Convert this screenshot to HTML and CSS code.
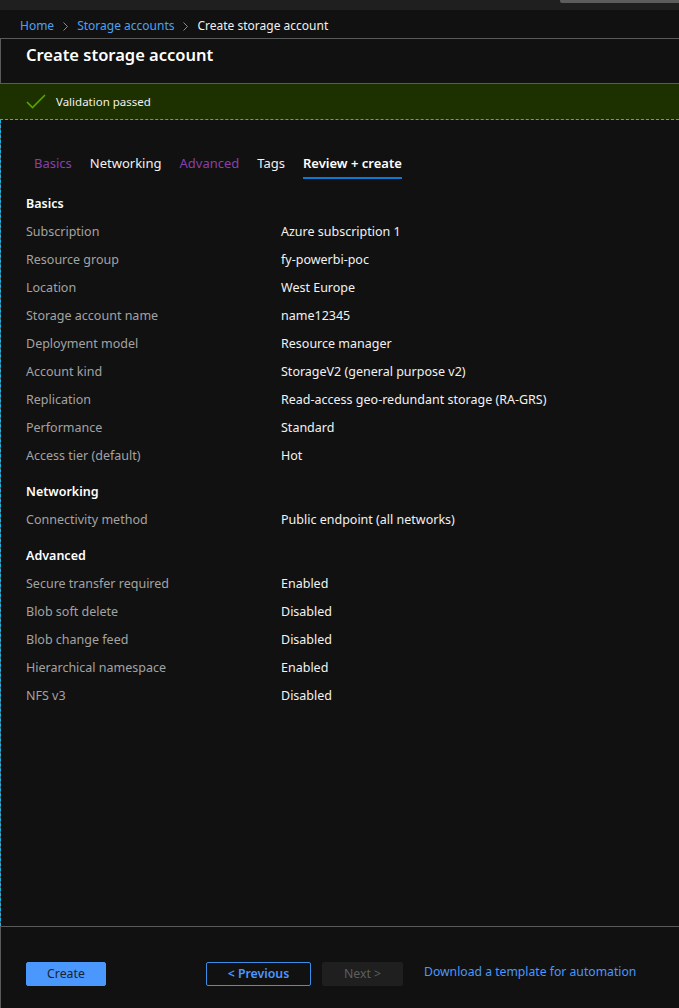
FILE: index.html
```html
<!DOCTYPE html>
<html>
<head>
<meta charset="utf-8">
<link rel="stylesheet" href="styles.css">
</head>
<body>
<div class="topbar"><div class="topbar-pill"></div></div>
<nav class="crumbs">
  <a class="crumb-link">Home</a>
  <svg class="chev" width="5" height="9" viewBox="0 0 5 9"><path d="M0.5 0.5 L4.5 4.5 L0.5 8.5" fill="none" stroke="#8a8a8a" stroke-width="1"/></svg>
  <a class="crumb-link">Storage accounts</a>
  <svg class="chev" width="5" height="9" viewBox="0 0 5 9"><path d="M0.5 0.5 L4.5 4.5 L0.5 8.5" fill="none" stroke="#8a8a8a" stroke-width="1"/></svg>
  <span class="crumb-current">Create storage account</span>
</nav>
<div class="blade">
  <header class="blade-head">
    <h1 class="title">Create storage account</h1>
  </header>
  <div class="banner">
    <svg class="check" width="20" height="15" viewBox="0 0 20 15"><path d="M1 8 L6.5 13.5 L19 1" fill="none" stroke="#5ba300" stroke-width="1.6"/></svg>
    <span>Validation passed</span>
  </div>
  <div class="content">
    <div class="tabs">
      <span class="tab visited">Basics</span>
      <span class="tab">Networking</span>
      <span class="tab visited">Advanced</span>
      <span class="tab">Tags</span>
      <span class="tab active">Review + create</span>
    </div>

    <section class="group">
      <h2 class="section">Basics</h2>
      <dl class="rows">
        <div class="row"><dt>Subscription</dt><dd>Azure subscription 1</dd></div>
        <div class="row"><dt>Resource group</dt><dd>fy-powerbi-poc</dd></div>
        <div class="row"><dt>Location</dt><dd>West Europe</dd></div>
        <div class="row"><dt>Storage account name</dt><dd>name12345</dd></div>
        <div class="row"><dt>Deployment model</dt><dd>Resource manager</dd></div>
        <div class="row"><dt>Account kind</dt><dd>StorageV2 (general purpose v2)</dd></div>
        <div class="row"><dt>Replication</dt><dd>Read-access geo-redundant storage (RA-GRS)</dd></div>
        <div class="row"><dt>Performance</dt><dd>Standard</dd></div>
        <div class="row"><dt>Access tier (default)</dt><dd>Hot</dd></div>
      </dl>
    </section>

    <section class="group">
      <h2 class="section">Networking</h2>
      <dl class="rows">
        <div class="row"><dt>Connectivity method</dt><dd>Public endpoint (all networks)</dd></div>
      </dl>
    </section>

    <section class="group">
      <h2 class="section">Advanced</h2>
      <dl class="rows">
        <div class="row"><dt>Secure transfer required</dt><dd>Enabled</dd></div>
        <div class="row"><dt>Blob soft delete</dt><dd>Disabled</dd></div>
        <div class="row"><dt>Blob change feed</dt><dd>Disabled</dd></div>
        <div class="row"><dt>Hierarchical namespace</dt><dd>Enabled</dd></div>
        <div class="row"><dt>NFS v3</dt><dd>Disabled</dd></div>
      </dl>
    </section>
  </div>
  <footer class="footer">
    <button class="btn btn-primary">Create</button>
    <button class="btn btn-outline">&lt; Previous</button>
    <button class="btn btn-disabled">Next &gt;</button>
    <a class="footer-link">Download a template for automation</a>
  </footer>
</div>
</body>
</html>
```

FILE: styles.css
```css
* { box-sizing: border-box; }
html, body { margin: 0; padding: 0; }
body {
  width: 679px;
  height: 1008px;
  overflow: hidden;
  background: #111111;
  color: #f2f2f2;
  font-family: "Noto Sans", "Open Sans", sans-serif;
  font-size: 12.5px;
}
.topbar {
  height: 10px;
  background: #1f1f1f;
  display: flex;
  justify-content: flex-end;
}
.topbar-pill {
  width: 119px;
  height: 3px;
  background: #5c5c5c;
  border-bottom-left-radius: 2px;
}
.crumbs {
  height: 28px;
  display: flex;
  align-items: center;
  padding: 3px 0 0 20px;
  gap: 9px;
  font-size: 12px;
  line-height: 16px;
}
.crumb-link { color: #4ea1f0; }
.crumb-current { color: #f0f0f0; }
.chev { display: block; margin-top: 1px; }
.blade {
  border-left: 1px solid #5a5a5a;
  display: flex;
  flex-direction: column;
  height: 970px;
}
.blade-head {
  border-top: 1px solid #5a5a5a;
  border-bottom: 1px solid #5a5a5a;
  height: 46px;
  padding: 4px 0 0 25px;
}
.title {
  margin: 0;
  font-size: 16.5px;
  font-weight: 600;
  color: #ffffff;
  line-height: 24px;
}
.banner {
  height: 36px;
  background: #1d3100;
  border-bottom: 1px dashed #1ab3e8;
  display: flex;
  align-items: center;
  padding-left: 26px;
  gap: 10px;
  font-size: 11.5px;
  color: #f0f0f0;
  margin-left: -1px;
}
.content {
  flex: 1;
  border-left: 1px dashed #1ab3e8;
  margin-left: -1px;
  padding: 34px 0 0 25px;
}
.tabs {
  display: flex;
  gap: 18px;
  padding-left: 8px;
  align-items: flex-start;
  font-size: 13px;
  margin-bottom: 11px;
}
.tab { color: #f2f2f2; line-height: 18px; padding-bottom: 5px; border-bottom: 2px solid transparent; }
.tab.visited { color: #8b3fab; }
.tab.active { font-weight: 600; border-bottom-color: #0f78d4; color: #ffffff; }
.group + .group { margin-top: 8px; }
.section {
  margin: 0;
  font-size: 12.5px;
  font-weight: 600;
  color: #ffffff;
  line-height: 28px;
  height: 28px;
}
.rows { margin: 0; padding: 0; }
.row {
  display: grid;
  grid-template-columns: 255px 1fr;
  height: 28px;
  line-height: 28px;
}
.row dt { color: #a3a3a3; }
.row dd { margin: 0; color: #f2f2f2; }
.footer {
  height: 82px;
  border-top: 1px solid #5a5a5a;
  margin-left: -1px;
  display: flex;
  align-items: flex-start;
  padding: 35px 0 0 26px;
  flex-shrink: 0;
}
.btn {
  font-family: inherit;
  font-size: 12.3px;
  height: 24px;
  border-radius: 2px;
  padding: 0;
  line-height: 20px;
}
.btn-primary {
  width: 80px;
  background: #4a98fd;
  border: 1px solid #4a98fd;
  color: #1b2333;
}
.btn-outline {
  width: 105px;
  margin-left: 100px;
  background: transparent;
  border: 1px solid #3d8ee6;
  color: #4a98fd;
  font-weight: 600;
}
.btn-disabled {
  width: 81px;
  margin-left: 11px;
  background: #1f1f1f;
  border: 1px solid #1f1f1f;
  color: #5e5e5e;
}
.footer-link {
  margin-left: 21px;
  color: #4a98fd;
  font-size: 12.2px;
  line-height: 20px;
}
```
